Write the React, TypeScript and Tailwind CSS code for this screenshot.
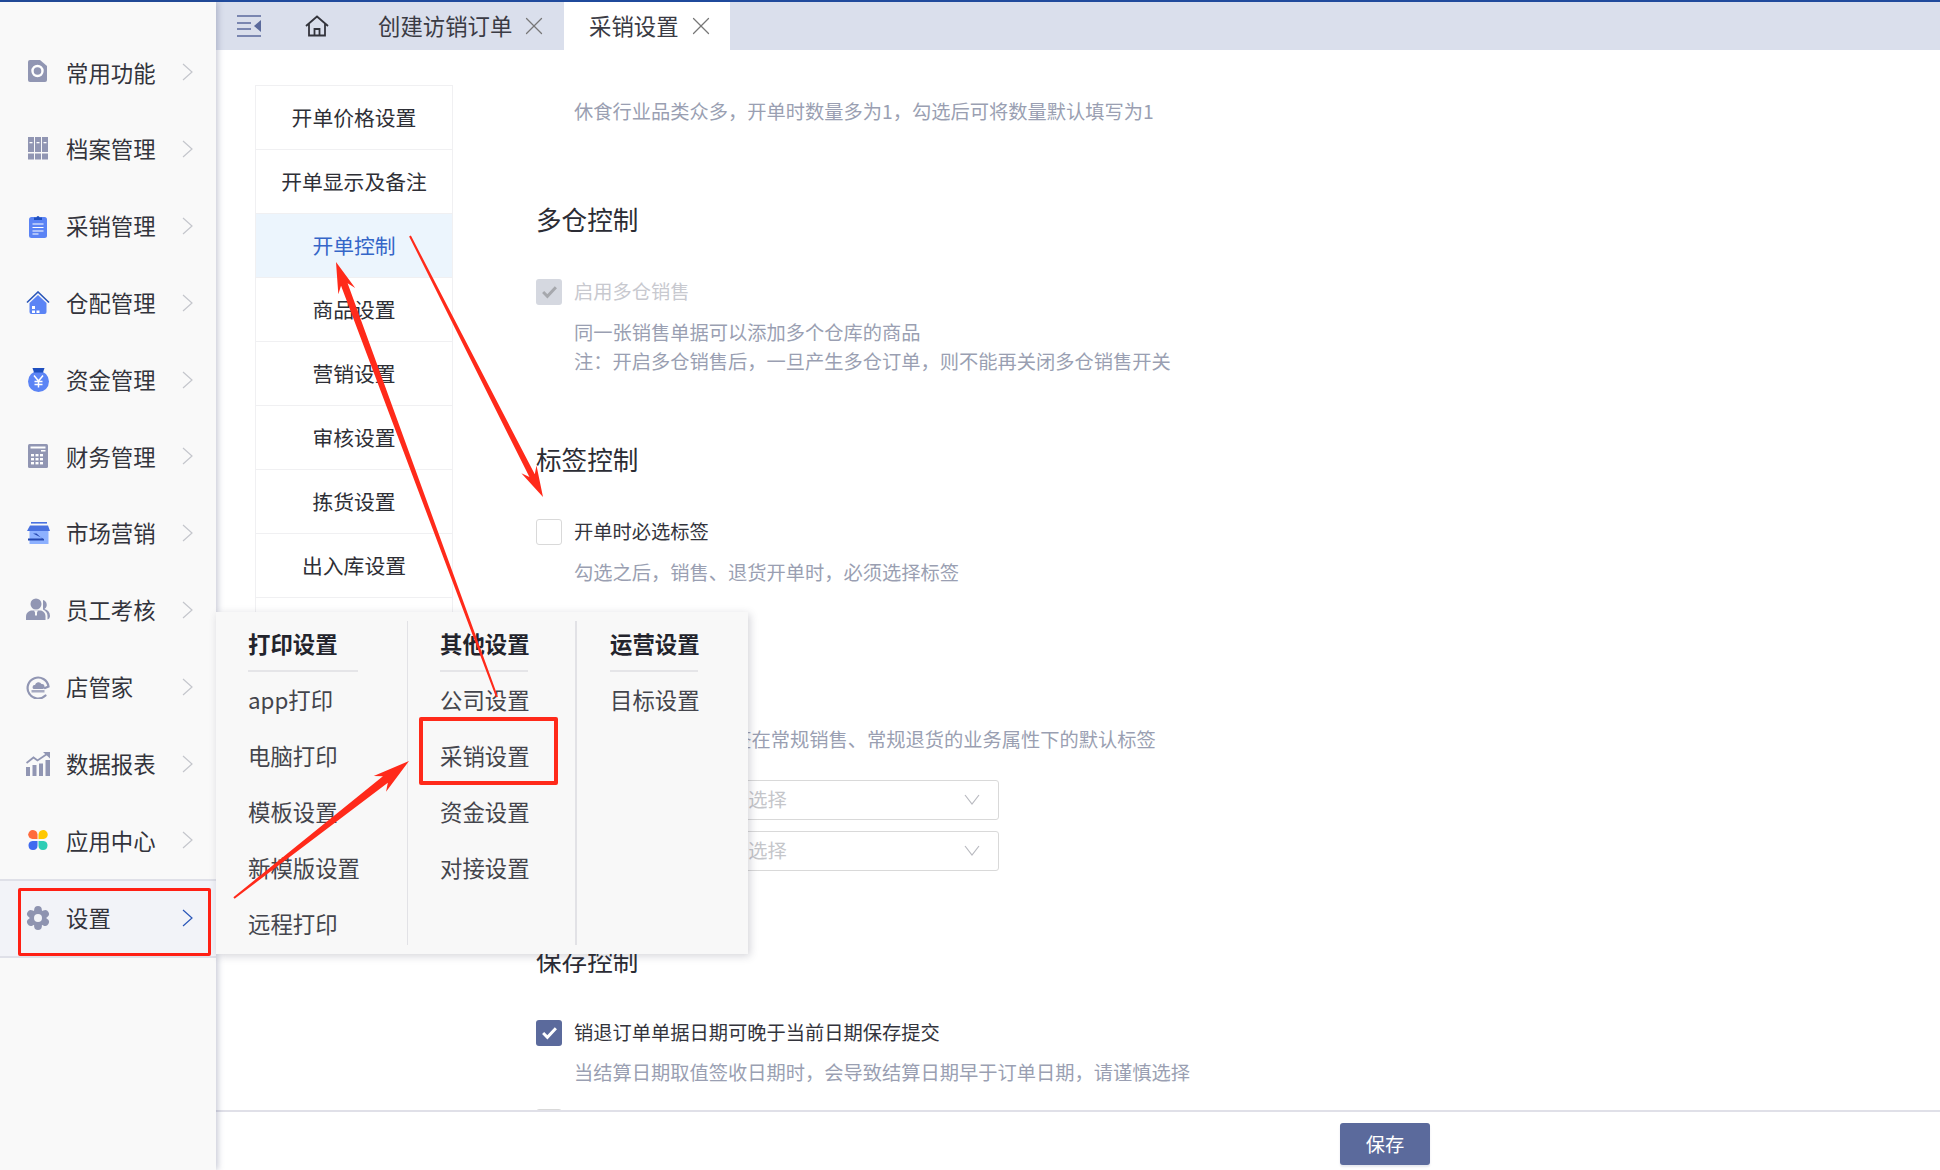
import React from 'react';
import { X } from 'lucide-react';

const GREY = '#9196b3';
const BLUE = '#5b84f5';
const DEEP = '#1f4fbf';

const IconCommon = () => (
  <svg width="24" height="24" viewBox="0 0 24 24">
    <path d="M4 0h10l7 6v14a2 2 0 0 1-2 2H4a2 2 0 0 1-2-2V2a2 2 0 0 1 2-2z" fill={GREY} />
    <circle cx="11.5" cy="11" r="5" fill="none" stroke="#fff" strokeWidth="2.4" />
  </svg>
);

const IconArchive = () => (
  <svg width="24" height="24" viewBox="0 0 24 24">
    {[2, 9, 16].map((x) => (
      <g key={x}>
        <rect x={x} y="0" width="6" height="15" fill={GREY} />
        <rect x={x} y="16.5" width="6" height="6" fill={GREY} />
        <rect x={x + 1.5} y="5" width="3" height="1.3" fill="#fff" />
      </g>
    ))}
  </svg>
);

const IconClipboard = () => (
  <svg width="24" height="24" viewBox="0 0 24 24">
    <rect x="3" y="3" width="18" height="21" rx="2.5" fill={BLUE} />
    <path d="M8 3.5h2.5a1.5 1.5 0 0 1 3 0H16V6H8z" fill={DEEP} />
    <path d="M6.5 10h11M6.5 13.5h11M6.5 17h11M6.5 20h6" stroke="#fff" strokeWidth="1.2" />
  </svg>
);

const IconHouse = () => (
  <svg width="24" height="24" viewBox="0 0 24 24">
    <path d="M1 11.5 12 1l11 10.5" fill="none" stroke="#2a56b8" strokeWidth="1.6" />
    <path d="M12 4 20.5 12v9a2 2 0 0 1-2 2h-13a2 2 0 0 1-2-2v-9z" fill={BLUE} />
    <rect x="6" y="15" width="3" height="3" fill="#fff" />
    <rect x="6" y="19.5" width="3" height="2.5" fill="#fff" />
    <rect x="10.5" y="19.5" width="3" height="2.5" fill="#fff" />
  </svg>
);

const IconMoney = () => (
  <svg width="24" height="24" viewBox="0 0 24 24">
    <circle cx="12.5" cy="13.5" r="10.5" fill={BLUE} />
    <path d="M6.5 0h12l-1.5 4.5h-9z" fill={DEEP} />
    <path d="M8 7.5l4.5 5.5 4.5-5.5M12.5 13v6.5M8.5 13.5h8M8.5 16.5h8" fill="none" stroke="#fff" strokeWidth="1.5" />
  </svg>
);

const IconCalc = () => (
  <svg width="24" height="24" viewBox="0 0 24 24">
    <rect x="2" y="0" width="20" height="24" rx="1.5" fill={GREY} />
    <rect x="4.5" y="2.5" width="15" height="2" fill="#fff" />
    <rect x="15" y="6" width="4.5" height="1.5" fill="#fff" />
    {[10, 14, 18].map((y) =>
      [5, 9.5, 14].map((x) => <rect key={`${x}-${y}`} x={x} y={y} width="3" height="2.4" fill="#fff" />),
    )}
  </svg>
);

const IconMarket = () => (
  <svg width="24" height="24" viewBox="0 0 24 24">
    <rect x="5" y="1" width="16" height="1.6" fill="#4a72e0" />
    <path d="M4 4.5h18l2 5.5H1z" fill="#4a72e0" />
    <path d="M3.5 10h19v13h-19z" fill="#8db1ff" />
    <path d="M7 12.5h3.5l5.5 5H2v2h16v-1.5z" fill="#2347b0" />
  </svg>
);

const IconStaff = () => (
  <svg width="24" height="24" viewBox="0 0 24 24">
    <circle cx="10" cy="6" r="5.5" fill={GREY} />
    <path d="M0 22v-3.500c0-3.500 3-6 6-6h8c3 0 5.500 2.500 5.500 6V22z" fill={GREY} />
    <path d="M8 12.500h4l-1 2v3H9v-3z" fill="#f9f9f9" />
    <path d="M17 2a5 5 0 0 1 1.500 9c3.500 1 5.500 3.500 5.500 7 0 1.500-1 3-2.500 3.500V18c0-3-1.500-5-4.500-6.500z" fill={GREY} />
  </svg>
);

const IconShop = () => (
  <svg width="24" height="24" viewBox="0 0 24 24">
    <path d="M19.500 20.500A10.500 10.500 0 1 1 22.500 11.500L19 13" fill="none" stroke={GREY} strokeWidth="2.2" strokeLinecap="round" />
    <path d="M9 10a3.500 3.500 0 0 1 6.500-1 2.500 2.500 0 0 1 1 5H7.500a2.200 2.200 0 0 1 1.500-4z" fill={GREY} />
    <path d="M5.500 15h13v2.500h-13z" fill={GREY} opacity="0.8" />
  </svg>
);

const IconChart = () => (
  <svg width="24" height="24" viewBox="0 0 24 24">
    <path d="M0 15h4v9H0zM6.500 13h4v11h-4zM13 11.500h4V24h-4zM19.500 8h4.500v16h-4.500z" fill={GREY} />
    <path d="M0.500 11 7.500 5.500l4 3L21 2" fill="none" stroke={GREY} strokeWidth="1.8" />
    <path d="M17 0h7v6.500z" fill={GREY} />
  </svg>
);

const IconApps = () => (
  <svg width="24" height="24" viewBox="0 0 24 24">
    <path d="M7 2a5 5 0 0 1 4.500 4.500v4.500H6.500A4.500 4.500 0 0 1 7 2z" fill="#ff6b3d" />
    <path d="M17 2a4.500 4.500 0 0 1 .5 9h-5V6.500A5 5 0 0 1 17 2z" fill="#ffc800" />
    <path d="M6.500 13h5v4.500A4.500 4.500 0 1 1 6.500 13z" fill="#3f6bef" />
    <path d="M12.500 13h5a4.500 4.500 0 1 1-5 4.500z" fill="#2fcdb5" />
  </svg>
);

const IconGear = () => (
  <svg width="24" height="24" viewBox="0 0 24 24">
    {[0, 60, 120, 180, 240, 300].map((a) => (
      <circle key={a} cx="12" cy="3.800" r="3.800" fill="#8e93b0" transform={`rotate(${a} 12 12)`} />
    ))}
    <circle cx="12" cy="12" r="8.500" fill="#8e93b0" />
    <circle cx="12" cy="12" r="4" fill="#f2f3f8" />
  </svg>
);

const Chevron = ({ color = '#c4c6cc' }: { color?: string }) => (
  <svg width="11" height="18" viewBox="0 0 11 18" fill="none" className="mr-[23px] ml-auto shrink-0">
    <path d="M1 1l9 8-9 8" stroke={color} strokeWidth="1.200" />
  </svg>
);

const menu = [
  { label: '常用功能', icon: <IconCommon /> },
  { label: '档案管理', icon: <IconArchive /> },
  { label: '采销管理', icon: <IconClipboard /> },
  { label: '仓配管理', icon: <IconHouse /> },
  { label: '资金管理', icon: <IconMoney /> },
  { label: '财务管理', icon: <IconCalc /> },
  { label: '市场营销', icon: <IconMarket /> },
  { label: '员工考核', icon: <IconStaff /> },
  { label: '店管家', icon: <IconShop /> },
  { label: '数据报表', icon: <IconChart /> },
  { label: '应用中心', icon: <IconApps /> },
];

const Sidebar = () => (
  <aside className="relative z-10 w-[216px] shrink-0 bg-[#f9f9f9] pt-[32px] shadow-[2px_0_6px_rgba(60,70,110,0.28)]">
    {menu.map((m) => (
      <div key={m.label} className="flex h-[76.8px] items-center pl-[26px] text-[22.4px] text-[#33343c]">
        {m.icon}
        <span className="ml-4">{m.label}</span>
        <Chevron />
      </div>
    ))}
    <div className="flex h-[79px] items-center border-y-2 border-[#dfe0e8] bg-[#f2f3f8] pl-[26px] text-[22.4px] text-[#33343c]">
      <IconGear />
      <span className="ml-4">设置</span>
      <Chevron color="#2a56b8" />
    </div>
  </aside>
);

const TabBar = () => (
  <div className="flex h-12 shrink-0 items-stretch bg-[#dadfec] text-[22.4px] text-[#3a3b44]">
    <div className="flex w-[148px] items-center pl-[21px]">
      <svg width="24" height="22" viewBox="0 0 24 22" fill="none">
        <path d="M0 1h24M0 21h24M0 8h14M0 14h14" stroke="#5b6a9c" strokeWidth="1.500" />
        <path d="M24 5v12l-7-6z" fill="#5b6a9c" />
      </svg>
      <svg width="24" height="22" viewBox="0 0 24 22" fill="none" className="ml-[44px]">
        <path d="M1 11 12 1.500 23 11M4 9v11.500h16V9M9.500 20.500V14h5v6.500" stroke="#33343c" strokeWidth="1.800" />
      </svg>
    </div>
    <div className="flex w-[200px] items-center pl-[14px]">
      <span>创建访销订单</span>
      <X size={30} strokeWidth={1} className="ml-[7px] text-[#777]" />
    </div>
    <div className="flex w-[166px] items-center bg-white pl-[25px]">
      <span>采销设置</span>
      <X size={30} strokeWidth={1} className="ml-[7px] text-[#777]" />
    </div>
  </div>
);

const navItems = ['开单价格设置', '开单显示及备注', '开单控制', '商品设置', '营销设置', '审核设置', '拣货设置', '出入库设置', ''];

const SettingsNav = () => (
  <nav className="mt-[35px] ml-[39px] w-[198px] shrink-0 self-start border border-[#f0f0f2] text-[20.8px] text-[#2e2f36]">
    {navItems.map((n, i) => (
      <div
        key={i}
        className={
          n === '开单控制'
            ? 'flex h-16 items-center justify-center border-b border-[#f0f0f2] bg-[#ecf5fd] text-[#3566c8]'
            : 'flex h-16 items-center justify-center border-b border-[#f0f0f2]'
        }
      >
        {n}
      </div>
    ))}
  </nav>
);

const Check = ({ state }: { state: 'on' | 'off' | 'disabled' }) => {
  if (state === 'off') return <span className="h-[26px] w-[26px] shrink-0 rounded-[3px] border border-[#d9d9d9] bg-white" />;
  const on = state === 'on';
  return (
    <span className={on ? 'flex h-[26px] w-[26px] shrink-0 items-center justify-center rounded-[3px] bg-[#5b6a9c]' : 'flex h-[26px] w-[26px] shrink-0 items-center justify-center rounded-[3px] bg-[#d5d8e0]'}>
      <svg width="17" height="14" viewBox="0 0 16 13" fill="none">
        <path d="M2 6.500 6 10.500 14 2" stroke={on ? '#fff' : '#a6a8ad'} strokeWidth="2.800" />
      </svg>
    </span>
  );
};

const Heading = ({ text, className }: { text: string; className: string }) => (
  <h3 className={`${className} h-9 text-[25.6px] leading-9 font-normal text-[#2b2c34]`}>{text}</h3>
);

const Desc = ({ children, className }: { children: React.ReactNode; className: string }) => (
  <p className={`${className} pl-[38px] text-[19.25px] leading-[29.5px] whitespace-pre text-[#9a9fb2]`}>{children}</p>
);

const CheckRow = ({ state, label, className }: { state: 'on' | 'off' | 'disabled'; label: string; className: string }) => (
  <div className={`${className} flex h-[26px] items-center gap-3 text-[19.25px]`}>
    <Check state={state} />
    <span className={state === 'disabled' ? 'text-[#c8c9cf]' : 'text-[#33343c]'}>{label}</span>
  </div>
);

const FakeSelect = ({ className }: { className: string }) => (
  <div className={`${className} ml-[174px] flex h-10 w-[289px] items-center justify-between rounded-[3px] border border-[#d9d9d9] pr-[18px] pl-[18px] text-[19.25px] text-[#c5c6ca]`}>
    请选择
    <svg width="16" height="11" viewBox="0 0 16 11" fill="none">
      <path d="M1 1l7 9 7-9" stroke="#b9bac0" strokeWidth="1.200" />
    </svg>
  </div>
);

const Content = () => (
  <div className="ml-[83px] min-w-0 flex-1">
    <Desc className="mt-[47px]">休食行业品类众多，开单时数量多为1，勾选后可将数量默认填写为1</Desc>

    <Heading text="多仓控制" className="mt-[74px]" />
    <CheckRow state="disabled" label="启用多仓销售" className="mt-[42px]" />
    <Desc className="mt-[13px]">
      同一张销售单据可以添加多个仓库的商品
      <br />
      注：开启多仓销售后，一旦产生多仓订单，则不能再关闭多仓销售开关
    </Desc>

    <Heading text="标签控制" className="mt-[64px]" />
    <CheckRow state="off" label="开单时必选标签" className="mt-[42px]" />
    <Desc className="mt-[13px]">勾选之后，销售、退货开单时，必须选择标签</Desc>

    <Desc className="mt-[138px]">用于设置 开单时标签在常规销售、常规退货的业务属性下的默认标签</Desc>
    <FakeSelect className="mt-[25px]" />
    <FakeSelect className="mt-[11px]" />

    <Heading text="保存控制" className="mt-[71px]" />
    <CheckRow state="on" label="销退订单单据日期可晚于当前日期保存提交" className="mt-[42px]" />
    <Desc className="mt-3">当结算日期取值签收日期时，会导致结算日期早于订单日期，请谨慎选择</Desc>
    <CheckRow state="off" label="" className="mt-[22px]" />
  </div>
);

const flyout = [
  { title: '打印设置', w: 'w-[110px]', box: 'w-[192px] border-r border-[#e2e2e6] pl-[32px]', items: ['app打印', '电脑打印', '模板设置', '新模版设置', '远程打印'] },
  { title: '其他设置', w: 'w-[88px]', box: 'w-[169px] border-r-2 border-[#e2e2e6] pl-[32px]', items: ['公司设置', '采销设置', '资金设置', '对接设置'] },
  { title: '运营设置', w: 'w-[88px]', box: 'flex-1 pl-[33px]', items: ['目标设置'] },
];

const Flyout = () => (
  <div className="absolute top-[612px] left-[216px] z-20 flex h-[342px] w-[532px] bg-[#f8f8f8] py-[9px] shadow-[2px_2px_8px_rgba(60,60,80,0.22)]">
    {flyout.map((c) => (
      <div key={c.title} className={c.box}>
        <div className={`${c.w} h-[51px] border-b-2 border-[#e5e5e8] pt-1 text-[22.4px] leading-[36px] font-bold whitespace-nowrap text-[#23242c]`}>
          {c.title}
        </div>
        {c.items.map((t) => (
          <div key={t} className="flex h-14 items-center pb-[1px] text-[22.4px] whitespace-nowrap text-[#44454c]">
            {t}
          </div>
        ))}
      </div>
    ))}
  </div>
);

// tapered annotation arrow, thin at the tail
const arrowPoints = (x1: number, y1: number, x2: number, y2: number, shaft: number, headW: number, headL: number) => {
  const len = Math.hypot(x2 - x1, y2 - y1);
  const ux = (x2 - x1) / len;
  const uy = (y2 - y1) / len;
  const nx = -uy;
  const ny = ux;
  const at = (along: number, side: number) => `${x1 + ux * along + nx * side},${y1 + uy * along + ny * side}`;
  const neck = len - headL;
  return [
    at(0, 1),
    at(neck + 4, shaft / 2),
    at(neck - 3, headW / 2),
    at(len, 0),
    at(neck - 3, -headW / 2),
    at(neck + 4, -shaft / 2),
    at(0, -1),
  ].join(' ');
};

const Annotations = () => (
  <>
    <div className="absolute top-[888px] left-[18px] z-30 h-[68px] w-[193px] rounded-[2px] border-[3px] border-[#ff1f14]" />
    <div className="absolute top-[717px] left-[419px] z-30 h-[68px] w-[139px] rounded-[2px] border-[4px] border-[#ff2a1a]" />
    <svg className="absolute inset-0 z-30 h-full w-full" viewBox="0 0 1940 1170">
      <polygon points={arrowPoints(234, 898, 409, 761, 8, 20, 34)} fill="#ff2a1a" />
      <polygon points={arrowPoints(497, 697, 336, 262, 7, 18, 28)} fill="#ff2a1a" />
      <polygon points={arrowPoints(410, 236, 543, 497, 6, 17, 28)} fill="#ff2a1a" />
    </svg>
  </>
);

export default function App() {
  return (
    <div className="relative flex h-[1170px] w-[1940px] flex-col overflow-hidden bg-white font-['Noto_Sans_CJK_SC','Liberation_Sans',sans-serif]">
      <div className="h-0.5 shrink-0 bg-[#1f4a9c]" />
      <div className="flex min-h-0 flex-1">
        <Sidebar />
        <main className="flex min-w-0 flex-1 flex-col">
          <TabBar />
          <div className="flex min-h-0 flex-1 overflow-hidden">
            <SettingsNav />
            <Content />
          </div>
          <footer className="relative flex h-[60px] shrink-0 items-center border-t-2 border-[#e0e0e8] bg-white pt-[6px] pl-[1124px]">
            <button className="h-[42px] w-[90px] rounded-[3px] bg-[#5b6a9c] text-[19.25px] text-white shadow-[0_2px_2px_rgba(90,100,150,0.15)]">
              保存
            </button>
          </footer>
        </main>
      </div>
      <Flyout />
      <Annotations />
    </div>
  );
}
